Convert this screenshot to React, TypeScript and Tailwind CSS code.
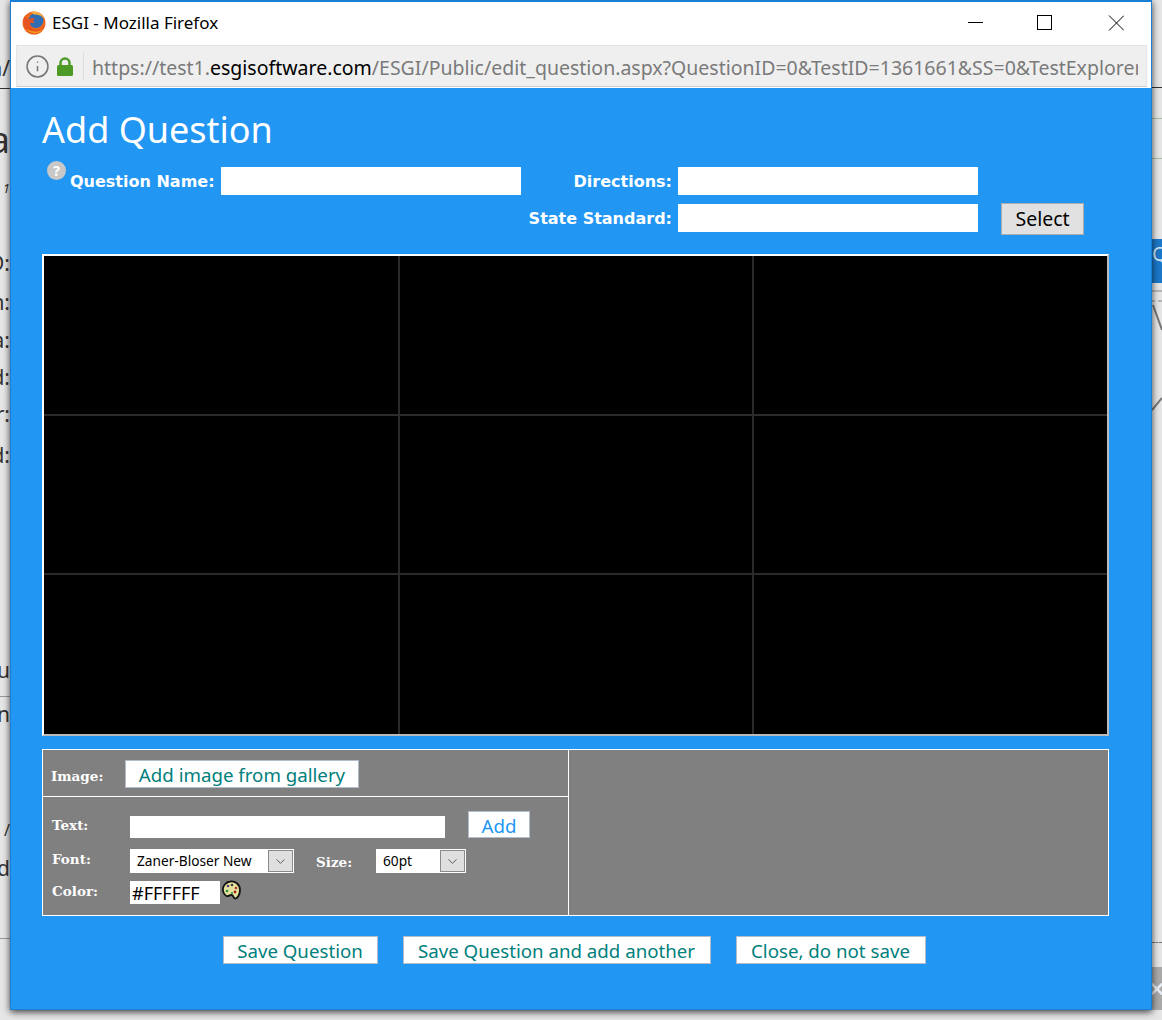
import { ChevronDown, Info, X } from "lucide-react";

const sans = "font-['Noto_Sans',sans-serif]";
const heavy = "font-['DejaVu_Sans',sans-serif] text-[16px] font-bold text-white whitespace-nowrap";
const small = "font-['DejaVu_Serif',serif] text-[13.500px] font-bold text-white";
const link = `flex items-center justify-center pt-[2px] bg-white border border-[#b3bccb] text-[18.700px] leading-none text-[#00807c] ${sans}`;

function FirefoxLogo() {
  return (
    <svg width="24" height="24" viewBox="0 0 24 24">
      <circle cx="12" cy="12" r="11.500" fill="#ef6a1f" />
      <circle cx="14" cy="9.500" r="7.500" fill="#2f6db5" />
      <path d="M2 6c-2 7 1 15 9 17 6 1 11-3 12-10-2 4-5 6-9 5.500-4-.5-6.500-3.500-5.500-7 1.500 1 3 1 4 .3-2-1-1.500-3 .5-4-2.500-1.500-5-.5-6 1-1.500-1-2-2-2.500-3.300z" fill="#e8541f" />
      <path d="M9 1c5-1.500 11 1.500 13.500 7.500C20 4.500 16 3 12 3.500z" fill="#fbb03b" />
      <path d="M4 18c3 4 8 5 12 4 3-1 5-3 6-6-2 3-5 5-9 4.500-4-.3-7-1.500-9-2.500z" fill="#f7941e" />
    </svg>
  );
}

function LockIcon() {
  return (
    <svg width="18" height="19" viewBox="0 0 18 19" className="ml-[6px] shrink-0">
      <path d="M4.500 9V6a4.500 4.500 0 0 1 9 0v3" fill="none" stroke="#4e9a27" strokeWidth="2.500" />
      <rect x="1" y="8" width="16" height="11" rx="1.500" fill="#4e9a27" />
    </svg>
  );
}

function WindowButtons() {
  return (
    <svg width="156" height="16" viewBox="0 0 156 16" className="ml-auto mr-[27px] text-black" stroke="currentColor" fill="none">
      <path d="M0 7.500h15" />
      <rect x="69.500" y=".5" width="14" height="14" />
      <path d="M141 .5l15 15M156 .5l-15 15" />
    </svg>
  );
}

function Palette() {
  return (
    <svg width="21" height="21" viewBox="0 0 21 21">
      <path d="M9 1.500c5-1 10 3 10 8.500 0 5-3 9-5 8.500-2-.5-1-3-3.500-3.500-2-.4-3 2-5 1C3 15 1.500 11 2 8c.5-3 3.500-6 7-6.500z" fill="#e4e29c" stroke="#111" strokeWidth="1.800" />
      <circle cx="7" cy="6" r="1.300" fill="#5a3a7a" />
      <circle cx="11" cy="5" r="1.300" fill="#3a3a3a" />
      <circle cx="15" cy="8" r="1.300" fill="#a33" />
      <circle cx="6" cy="11" r="1.300" fill="#2f8a4a" />
      <circle cx="14" cy="12" r="1.400" fill="#a22" />
      <circle cx="11" cy="13" r="1" fill="#2f8a4a" />
    </svg>
  );
}

function FakeSelect({ label, width }: { label: string; width: string }) {
  return (
    <div className={`flex items-center h-6 bg-white border border-white ${width}`}>
      <span className={`flex-1 pl-[6px] text-[13.700px] text-black ${sans}`}>{label}</span>
      <span className="flex items-center justify-center w-[25px] h-[22px] bg-[#dfdfdf] border border-[#8a8a8a]">
        <ChevronDown size={15} strokeWidth={1.200} className="text-[#333]" />
      </span>
    </div>
  );
}

function LeftStrip() {
  // page behind the popup, only its last letters show
  const rows = [
    ["h-[89px] pt-[54px] border-b border-[#333] text-[21px] leading-[28px]", "n/"],
    ["h-[89px] pt-[31px] text-[36px] leading-[40px]", "a"],
    ["h-[20px] text-[13px] italic leading-[20px]", "r 1"],
    ["h-[51px]", ""],
    ["h-[39px] text-[21px] leading-[28px]", "D:"],
    ["h-[38px] text-[21px] leading-[28px]", "n:"],
    ["h-[37px] text-[21px] leading-[28px]", "a:"],
    ["h-[37px] text-[21px] leading-[28px]", "d:"],
    ["h-[41px] text-[21px] leading-[28px]", "r:"],
    ["h-[215px] text-[21px] leading-[28px]", "d:"],
    ["h-[40px] text-[21px] leading-[28px]", "u"],
    ["h-[120px] pt-[3px] border-t border-[#999] text-[21px] leading-[28px]", "n"],
    ["h-[38px] text-[16px] leading-[28px]", "t /"],
    ["h-[84px] text-[21px] leading-[28px]", "d"],
    ["h-[72px] border-t border-[#999]", ""],
  ];
  return (
    <div className="w-[10px] shrink-0 h-[1010px] overflow-hidden flex flex-col">
      {rows.map(([box, text], i) => (
        <div key={i} className={`flex justify-end shrink-0 whitespace-nowrap text-[#333] ${sans} ${box}`}>
          {text}
        </div>
      ))}
    </div>
  );
}

function RightStrip() {
  return (
    <div className="w-[10px] shrink-0 h-[1010px] overflow-hidden flex flex-col">
      <div className="h-[88px] shrink-0 border-b border-[#333]" />
      <div className="h-[31px] shrink-0 border-b border-[#a9bd9f]" />
      <div className="h-[40px] shrink-0 border-b border-[#a9bd9f]" />
      <div className="h-[80px] shrink-0" />
      <div className={`h-[44px] shrink-0 bg-[#1c78c8] text-[20px] text-[#d5e8f7] ${sans}`}>Q</div>
      <svg width="10" height="130" viewBox="0 0 10 130" className="shrink-0">
        <path d="M0 8h10" stroke="#888" />
        <path d="M0 18h3M6 18h4" stroke="#888" />
        <path d="M1 22l9 25M0 127l10-12" stroke="#777" strokeWidth="2" fill="none" />
      </svg>
      <div className="h-[530px] shrink-0 border-b border-dashed border-[#777]" />
      <div className="h-[24px] shrink-0" />
      <div className="h-[43px] shrink-0 bg-[#aaa] flex items-center">
        <X size={18} strokeWidth={3.500} className="text-[#e8eef5] -ml-[4px] shrink-0" />
      </div>
    </div>
  );
}

export default function App() {
  return (
    <div className="w-[1162px] h-[1020px] overflow-hidden bg-[#e6e6e6] flex">
      <LeftStrip />
      <div className="relative z-10 w-[1142px] shrink-0 h-[1010px] flex flex-col bg-[#2196f3] border border-t-2 border-[#1a7fd4] shadow-[0_2px_7px_rgba(0,0,0,0.75)]">
        <div className="h-[43px] shrink-0 bg-white flex items-center pl-[11px] pb-[2px]">
          <FirefoxLogo />
          <span className={`ml-[6px] text-[17px] text-black ${sans}`}>ESGI - Mozilla Firefox</span>
          <WindowButtons />
        </div>
        <div className="h-[43px] shrink-0 bg-white pl-[5px] pr-[4px]">
          <div className="h-[42px] bg-[#efefef] border border-[#e4e4e4] border-b-[#ccc] flex items-center pl-[8px] pr-[8px]">
            <Info size={25} strokeWidth={1.500} className="text-[#777] shrink-0" />
            <LockIcon />
            <div className="w-px h-[28px] bg-[#ddd] ml-[9px] mr-2 shrink-0" />
            <div className={`flex-1 overflow-hidden whitespace-nowrap pt-[3px] text-[19.500px] text-[#7a7a7a] ${sans}`}>
              https://test1.<span className="text-black">esgisoftware.com</span>/ESGI/Public/edit_question.aspx?QuestionID=0&amp;TestID=1361661&amp;SS=0&amp;TestExplorer
            </div>
          </div>
        </div>

        <div className="flex-1 pl-[31px] pr-[42px]">
          <h1 className={`h-[79px] pt-[17px] text-[36px] leading-[50px] text-white ${sans}`}>Add Question</h1>

          <div className="flex items-start h-[37px]">
            <span className="flex items-center justify-center w-[19px] h-[19px] rounded-full bg-[#c8c8c8] ml-[5px] -mt-[6px] text-[14px] font-bold text-white">?</span>
            <label className={`ml-[4px] w-[151px] h-[28px] leading-[30px] ${heavy}`}>Question Name:</label>
            <div className="w-[300px] h-[28px] bg-white" />
            <label className={`w-[157px] h-[28px] leading-[30px] text-right pr-[6px] ${heavy}`}>Directions:</label>
            <div className="w-[300px] h-[28px] bg-white" />
          </div>
          <div className="flex items-start h-[50px]">
            <label className={`w-[636px] h-[28px] leading-[30px] text-right pr-[6px] ${heavy}`}>State Standard:</label>
            <div className="w-[300px] h-[28px] bg-white" />
            <button className={`ml-[23px] w-[83px] h-[32px] -mt-[1px] bg-[#e1e1e1] border border-[#adadad] text-[19.500px] text-black ${sans}`}>Select</button>
          </div>

          <div className="h-[482px] border-2 border-white border-r-[#bbb] border-b-[#bbb] bg-black grid grid-cols-[356px_354px_1fr] grid-rows-[160px_159px_1fr]">
            {Array.from({ length: 9 }).map((_, i) => (
              <div key={i} className={`border-[#2a2a2a] ${i % 3 < 2 ? "border-r-2" : ""} ${i < 6 ? "border-b-2" : ""}`} />
            ))}
          </div>

          <div className="mt-[13px] h-[167px] bg-[#808080] border border-white flex">
            <div className="w-[526px] shrink-0 border-r border-white flex flex-col">
              <div className="h-[47px] shrink-0 border-b border-white flex items-center pl-[8px] pt-[2px]">
                <span className={`w-[74px] pt-[5px] ${small}`}>Image:</span>
                <button className={`${link} w-[234px] h-[28px] -mt-[1px] !pt-[4px]`}>Add image from gallery</button>
              </div>
              <div className="flex-1 pl-[9px] pt-[14px]">
                <div className="flex items-start h-[38px]">
                  <span className={`w-[78px] pt-[4px] ${small}`}>Text:</span>
                  <div className="w-[315px] h-[22px] mt-[5px] bg-white" />
                  <button className={`${link} ml-[23px] w-[62px] h-[27px] !pt-[3px] !text-[#2196f3]`}>Add</button>
                </div>
                <div className="flex items-start h-[32px]">
                  <span className={`w-[78px] ${small}`}>Font:</span>
                  <FakeSelect label="Zaner-Bloser New" width="w-[164px]" />
                  <span className={`w-[60px] ml-[22px] mt-[3px] ${small}`}>Size:</span>
                  <FakeSelect label="60pt" width="w-[90px]" />
                </div>
                <div className="flex items-start">
                  <span className={`w-[78px] ${small}`}>Color:</span>
                  <div className={`w-[90px] h-[23px] bg-white pl-[2px] text-[18px] leading-[25px] text-black ${sans}`}>#FFFFFF</div>
                  <span className="ml-[1px] -mt-[1px]"><Palette /></span>
                </div>
              </div>
            </div>
          </div>

          <div className="mt-[20px] flex justify-center gap-[25px] pr-[3px]">
            <button className={`${link} w-[155px] h-[28px]`}>Save Question</button>
            <button className={`${link} w-[308px] h-[28px]`}>Save Question and add another</button>
            <button className={`${link} w-[190px] h-[28px]`}>Close, do not save</button>
          </div>
        </div>
      </div>
      <RightStrip />
    </div>
  );
}
